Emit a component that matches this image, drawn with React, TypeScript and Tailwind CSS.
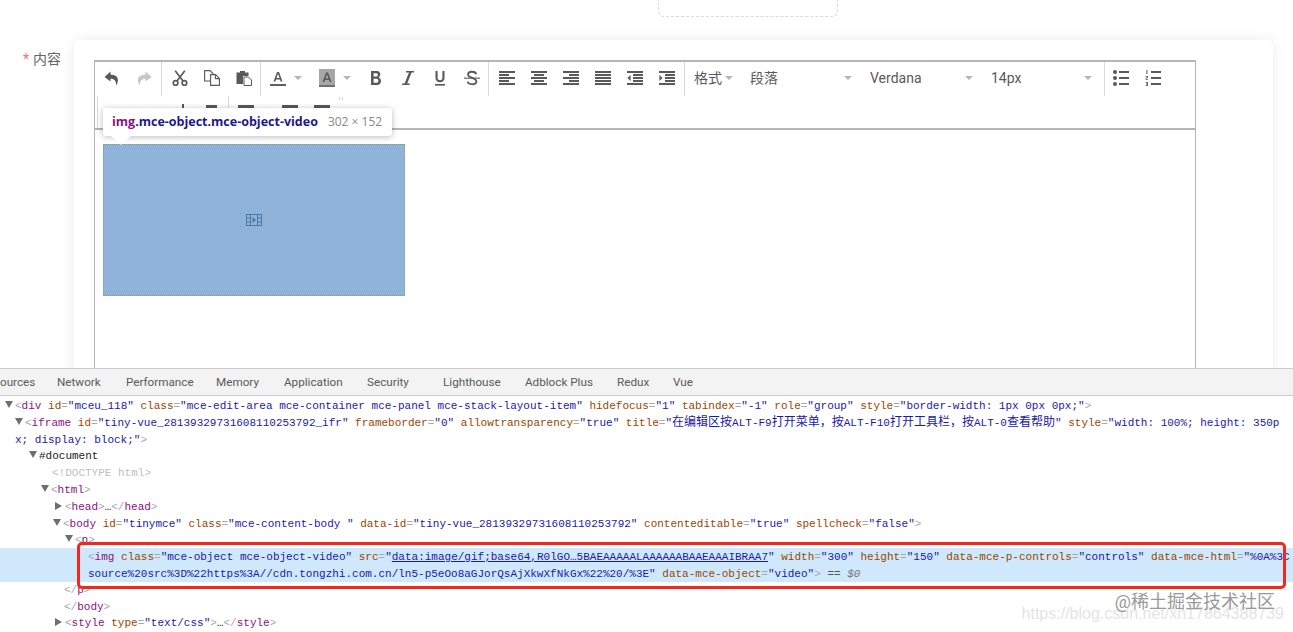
import React from "react";

const sans = "font-['Roboto','Noto_Sans_CJK_SC',sans-serif]";
const ink = "#595959";

// toolbar glyphs, all on a 16 grid
const Icon = ({ children, size = 16 }: { children: React.ReactNode; size?: number }) => (
  <svg width={size} height={size} viewBox="0 0 16 16" fill={ink}>
    {children}
  </svg>
);

const Undo = ({ color = ink }: { color?: string }) => (
  <svg width="16" height="16" viewBox="0 0 16 16" fill={color}>
    <path d="M6.5 1.5 L0.5 7 L6.5 11.5 V8.7 C10 8.5 12.2 10.5 12.2 15.5 C15 11.5 15.5 5 6.5 4.6 Z" />
  </svg>
);

const Redo = () => (
  <svg width="16" height="16" viewBox="0 0 16 16" fill="#c6c6c6">
    <path d="M9.5 1.5 L15.5 7 L9.5 11.5 V8.7 C6 8.5 3.8 10.5 3.8 15.5 C1 11.5 0.5 5 9.5 4.6 Z" />
  </svg>
);

const Cut = () => (
  <svg width="16" height="16" viewBox="0 0 16 16" fill="none" stroke={ink} strokeWidth="1.7">
    <circle cx="3.6" cy="13" r="2.3" />
    <circle cx="12.4" cy="13" r="2.3" />
    <path d="M5 11 L12.8 0.8 M11 11 L3.2 0.8" />
  </svg>
);

const Copy = () => (
  <svg width="16" height="16" viewBox="0 0 16 16" fill="#fff" stroke={ink} strokeWidth="1.1">
    <path d="M0.6 0.6 H6 L9 3.6 V11 H0.6 Z" />
    <path d="M6.6 4.6 H11.6 L15.4 8.4 V15.4 H6.6 Z" />
    <path d="M11.4 4.8 V8.6 H15.2" fill="none" />
  </svg>
);

const Paste = () => (
  <Icon>
    <path d="M0.5 2.5 H4 V1 H9 V2.5 H12.5 V6 H7 V14 H0.5 Z" />
    <path d="M8 7 H12.5 L15.5 10 V15.5 H8 Z" fill="#fff" stroke={ink} strokeWidth="1" />
  </Icon>
);

const TextColor = () => (
  <svg width="16" height="16" viewBox="0 0 16 16">
    <path d="M3.5 11.5 L7 2 H9 L12.5 11.5 H10.7 L10 9.4 H6 L5.3 11.5 Z M6.5 8 H9.5 L8 3.8 Z" fill={ink} fillRule="evenodd" />
    <rect x="0" y="14" width="16" height="2" fill="#5f5f5f" />
  </svg>
);

const BackColor = () => (
  <svg width="16" height="18" viewBox="0 0 16 18">
    <rect width="16" height="18" fill="#a6a6a6" />
    <rect y="16" width="16" height="2" fill="#707070" />
    <path d="M3.5 13 L7 3.5 H9 L12.5 13 H10.7 L10 11 H6 L5.3 13 Z M6.5 9.5 H9.5 L8 5.3 Z" fill={ink} fillRule="evenodd" />
  </svg>
);

const Bold = () => (
  <Icon>
    <path fillRule="evenodd" d="M3 1 H9 C12.6 1 13.4 5.8 10.6 7.4 C14.4 8.6 13.6 15 9 15 H3 Z M5.6 3.2 V6.6 H8.2 C10.4 6.6 10.4 3.2 8.2 3.2 Z M5.6 8.8 V12.8 H8.6 C11 12.8 11 8.8 8.6 8.8 Z" />
  </Icon>
);

const Italic = () => (
  <Icon>
    <path d="M6 1 H14 V2.6 H11.6 L7.2 13.4 H9.6 V15 H2 V13.4 H4.6 L9 2.6 H6 Z" />
  </Icon>
);

const Underline = () => (
  <Icon>
    <path d="M3.5 1 H5.6 V8 C5.6 11 10.4 11 10.4 8 V1 H12.5 V8 C12.5 13.6 3.5 13.6 3.5 8 Z" />
    <rect x="3" y="14" width="10" height="1.6" />
  </Icon>
);

const Strike = () => (
  <Icon>
    <path d="M12.2 4.2 C11.6 1.2 4.2 0.6 4 4.4 C3.8 8.4 12.6 7.4 12.4 11.6 C12.2 15.2 4.4 15 3.6 11.6" fill="none" stroke={ink} strokeWidth="1.8" />
    <rect x="0" y="7.6" width="16" height="1.1" />
  </Icon>
);

// rows of bars: [x, width] top to bottom
const Bars = ({ rows }: { rows: [number, number][] }) => (
  <Icon>
    {rows.map(([x, w], i) => (
      <rect key={i} x={x} y={1 + i * 3} width={w} height="2" />
    ))}
  </Icon>
);

const Outdent = () => (
  <Icon>
    <rect x="0" y="1" width="16" height="2" />
    <rect x="6" y="4" width="10" height="2" />
    <rect x="6" y="7" width="10" height="2" />
    <rect x="6" y="10" width="10" height="2" />
    <rect x="0" y="13" width="16" height="2" />
    <path d="M3.6 5 L0.4 8 L3.6 11 Z" />
  </Icon>
);

const Indent = () => (
  <Icon>
    <rect x="0" y="1" width="16" height="2" />
    <rect x="6" y="4" width="10" height="2" />
    <rect x="6" y="7" width="10" height="2" />
    <rect x="6" y="10" width="10" height="2" />
    <rect x="0" y="13" width="16" height="2" />
    <path d="M0.4 5 L3.6 8 L0.4 11 Z" />
  </Icon>
);

const BulletList = () => (
  <Icon>
    <circle cx="2" cy="2" r="2" />
    <circle cx="2" cy="8" r="2" />
    <circle cx="2" cy="14" r="2" />
    <rect x="6" y="1" width="10" height="2" />
    <rect x="6" y="7" width="10" height="2" />
    <rect x="6" y="13" width="10" height="2" />
  </Icon>
);

const NumberList = () => (
  <Icon>
    <rect x="1.4" y="0" width="1" height="4" />
    <path d="M0.6 6 H3 V8 H1.4 V9 H3 V9.8 H0.6 V7.4 H2.2 V6.8 H0.6 Z" />
    <path d="M0.6 12 H3 V16 H0.6 V15.2 H2.2 V14.4 H1 V13.6 H2.2 V12.8 H0.6 Z" />
    <rect x="6" y="1" width="10" height="2" />
    <rect x="6" y="7" width="10" height="2" />
    <rect x="6" y="13" width="10" height="2" />
  </Icon>
);

const Btn = ({ children }: { children: React.ReactNode }) => (
  <div className="flex h-[32px] w-[32px] items-center justify-center">{children}</div>
);

const Caret = () => (
  <span className="h-0 w-0 border-x-[4px] border-t-[4px] border-x-transparent border-t-[#b5b5b5]" />
);

const Sep = () => <div className="h-[34px] w-px bg-[#d9d9d9]" />;

const Select = ({ label, width }: { label: string; width: string }) => (
  <div className={`flex h-[32px] items-center justify-between pl-[6px] pr-[12px] text-[14px] text-[#595959] ${width}`}>
    <span>{label}</span>
    <Caret />
  </div>
);

const Toolbar = () => (
  <div className={`h-[68px] overflow-hidden border-b-2 border-[#b5b5b5] ${sans}`}>
    <div className="flex h-[34px] items-start pl-px">
      <Btn><Undo /></Btn>
      <Btn><Redo /></Btn>
      <div className="ml-px mr-[2px]"><Sep /></div>
      <Btn><Cut /></Btn>
      <Btn><Copy /></Btn>
      <Btn><Paste /></Btn>
      <div className="mr-px"><Sep /></div>
      <Btn><TextColor /></Btn>
      <div className="flex h-[32px] w-[17px] items-center"><Caret /></div>
      <Btn><BackColor /></Btn>
      <div className="flex h-[32px] w-[17px] items-center"><Caret /></div>
      <Btn><Bold /></Btn>
      <Btn><Italic /></Btn>
      <Btn><Underline /></Btn>
      <Btn><Strike /></Btn>
      <div className="mr-[2px]"><Sep /></div>
      <Btn><Bars rows={[[0, 16], [0, 10], [0, 16], [0, 10], [0, 16]]} /></Btn>
      <Btn><Bars rows={[[0, 16], [3, 10], [0, 16], [3, 10], [0, 16]]} /></Btn>
      <Btn><Bars rows={[[0, 16], [6, 10], [0, 16], [6, 10], [0, 16]]} /></Btn>
      <Btn><Bars rows={[[0, 16], [0, 16], [0, 16], [0, 16], [0, 16]]} /></Btn>
      <Btn><Outdent /></Btn>
      <Btn><Indent /></Btn>
      <div className="ml-px"><Sep /></div>
      <div className="flex h-[32px] w-[59px] items-center gap-[3px] pl-[9px] text-[14px] text-[#595959]">
        <span className="whitespace-nowrap">格式</span>
        <Caret />
      </div>
      <Select label="段落" width="w-[120px]" />
      <Select label="Verdana" width="w-[121px]" />
      <Select label="14px" width="w-[119px]" />
      <Sep />
      <Btn><BulletList /></Btn>
      <Btn><NumberList /></Btn>
    </div>
    {/* second row, nearly all of it under the element tooltip */}
    <div className="flex h-[32px] items-start">
      <div className="ml-[2px] h-[32px] w-px bg-[#d9d9d9]" />
      <div className="ml-[84px] mt-[8px] h-[4px] w-[2px] bg-[#595959]" />
      <div className="ml-[22px] mt-[9px] h-[3px] w-[11px] bg-[#595959]" />
      <div className="ml-[11px] h-[32px] w-px bg-[#d9d9d9]" />
      <div className="ml-[9px] mt-[9px] h-[3px] w-[16px] bg-[#595959]" />
      <div className="ml-[28px] mt-[9px] h-[3px] w-[16px] bg-[#595959]" />
      <div className="ml-[16px] mt-[9px] h-[3px] w-[16px] bg-[#595959]" />
      <div className="ml-[9px] mt-[1px] h-[3px] w-[4px] border-x border-[#d4d4d4]" />
    </div>
  </div>
);

const ElementTip = () => (
  <div className="absolute left-[8px] top-[46px] flex h-[28px] w-[289px] items-center rounded-[3px] bg-white pl-[9px] font-['Open_Sans',sans-serif] text-[12px] shadow-[0_1px_6px_rgba(0,0,0,0.28)]">
    <span className="text-[12.5px] font-bold text-[#881280]">img</span>
    <span className="text-[12.5px] font-bold text-[#1a1a8c]">.mce-object.mce-object-video</span>
    <span className="ml-[10px] text-[#888888]">302 × 152</span>
    <span className="absolute left-[8px] top-full h-0 w-0 border-x-[10px] border-t-[9px] border-x-transparent border-t-white" />
  </div>
);

const VideoPlaceholder = () => (
  <div className="ml-[8px] mt-[14px] flex h-[152px] w-[302px] items-center justify-center border border-dotted border-[#8f9a78] bg-[#8fb3d9]">
    <svg width="16" height="12" viewBox="0 0 16 12">
      <rect x="0.5" y="0.5" width="15" height="11" fill="none" stroke="#4f76a8" />
      <path d="M4.5 0.5 V11.5 M11.5 0.5 V11.5 M0.5 4 H4.5 M0.5 8 H4.5 M11.5 4 H15.5 M11.5 8 H15.5" stroke="#4f76a8" />
      <path d="M6.5 3 L10 6 L6.5 9 Z" fill="#4f76a8" />
    </svg>
  </div>
);

const tabs = [
  ["ources", "w-[57px]"],
  ["Network", "w-[69px]"],
  ["Performance", "w-[90px]"],
  ["Memory", "w-[68px]"],
  ["Application", "w-[83px]"],
  ["Security", "w-[76px]"],
  ["Lighthouse", "w-[82px]"],
  ["Adblock Plus", "w-[92px]"],
  ["Redux", "w-[56px]"],
  ["Vue", "w-[24px]"],
];

const Tag = ({ children }: { children: React.ReactNode }) => <span className="text-[#881280]">{children}</span>;
const Attr = ({ children }: { children: React.ReactNode }) => <span className="text-[#994500]">{children}</span>;
const Val = ({ children }: { children: React.ReactNode }) => <span className="text-[#1a1aa6]">{children}</span>;
const Gray = ({ children }: { children: React.ReactNode }) => <span className="text-[#a8a8a8]">{children}</span>;

const Arrow = ({ open }: { open?: boolean }) =>
  open ? (
    <span className="mr-[2px] inline-block h-0 w-0 border-x-[4px] border-t-[7px] border-x-transparent border-t-[#6e6e6e] align-[1px]" />
  ) : (
    <span className="mr-[3px] ml-px inline-block h-0 w-0 border-y-[4px] border-l-[7px] border-y-transparent border-l-[#6e6e6e] align-[0px]" />
  );

const Line = ({ pad, children }: { pad: string; children: React.ReactNode }) => (
  <div className={`h-[16.8px] whitespace-pre ${pad}`}>{children}</div>
);

const Attrs = ({ items }: { items: [string, string][] }) => (
  <>
    {items.map(([k, v]) => (
      <span key={k}>
        {" "}
        <Attr>{k}</Attr>
        <Gray>=</Gray>
        <Val>"{v}"</Val>
      </span>
    ))}
  </>
);

const Elements = () => (
  <div className="relative flex-1 overflow-hidden bg-white pt-[2px] font-['Liberation_Mono','Noto_Sans_CJK_SC',monospace] text-[11px] leading-[16.8px] text-[#222]">
    <Line pad="pl-[5px]">
      <Arrow open />
      <Gray>&lt;</Gray>
      <Tag>div</Tag>
      <Attrs items={[["id", "mceu_118"], ["class", "mce-edit-area mce-container mce-panel mce-stack-layout-item"], ["hidefocus", "1"], ["tabindex", "-1"], ["role", "group"], ["style", "border-width: 1px 0px 0px;"]]} />
      <Gray>&gt;</Gray>
    </Line>
    <Line pad="pl-[15px]">
      <Arrow open />
      <Gray>&lt;</Gray>
      <Tag>iframe</Tag>
      <Attrs items={[["id", "tiny-vue_28139329731608110253792_ifr"], ["frameborder", "0"], ["allowtransparency", "true"]]} />
      {" "}<Attr>title</Attr><Gray>=</Gray>
      <Val>"<span className="text-[12px]">在编辑区按</span>ALT-F9<span className="text-[12px]">打开菜单，按</span>ALT-F10<span className="text-[12px]">打开工具栏，按</span>ALT-0<span className="text-[12px]">查看帮助</span>"</Val>
      {" "}<Attr>style</Attr><Gray>=</Gray><Val>"width: 100%; height: 350p</Val>
    </Line>
    <Line pad="pl-[15px]">
      <Val>x; display: block;"</Val>
      <Gray>&gt;</Gray>
    </Line>
    <Line pad="pl-[29px]">
      <Arrow open />
      #document
    </Line>
    <Line pad="pl-[52px]">
      <span className="text-[#c0c0c0]">&lt;!DOCTYPE html&gt;</span>
    </Line>
    <Line pad="pl-[41px]">
      <Arrow open />
      <Gray>&lt;</Gray><Tag>html</Tag><Gray>&gt;</Gray>
    </Line>
    <Line pad="pl-[54px]">
      <Arrow />
      <Gray>&lt;</Gray><Tag>head</Tag><Gray>&gt;</Gray>…<Gray>&lt;/</Gray><Tag>head</Tag><Gray>&gt;</Gray>
    </Line>
    <Line pad="pl-[53px]">
      <Arrow open />
      <Gray>&lt;</Gray><Tag>body</Tag>
      <Attrs items={[["id", "tinymce"], ["class", "mce-content-body "], ["data-id", "tiny-vue_28139329731608110253792"], ["contenteditable", "true"], ["spellcheck", "false"]]} />
      <Gray>&gt;</Gray>
    </Line>
    <Line pad="pl-[65px]">
      <Arrow open />
      <Gray>&lt;</Gray><Tag>p</Tag><Gray>&gt;</Gray>
    </Line>
    <div className="-mt-px h-[33.6px] bg-[#cfe8fc] pt-px">
      <Line pad="pl-[88px]">
        <Gray>&lt;</Gray><Tag>img</Tag>
        <Attrs items={[["class", "mce-object mce-object-video"]]} />
        {" "}<Attr>src</Attr><Gray>=</Gray><Val>"</Val><span className="text-[#1a1aa6] underline">data:image/gif;base64,R0lGO…5BAEAAAAALAAAAAABAAEAAAIBRAA7</span><Val>"</Val>
        <Attrs items={[["width", "300"], ["height", "150"], ["data-mce-p-controls", "controls"]]} />
        {" "}<Attr>data-mce-html</Attr><Gray>=</Gray><Val>"%0A%3C</Val>
      </Line>
      <Line pad="pl-[88px]">
        <Val>source%20src%3D%22https%3A//cdn.tongzhi.com.cn/ln5-p5eOo8aGJorQsAjXkwXfNkGx%22%20/%3E"</Val>
        <Attrs items={[["data-mce-object", "video"]]} />
        <Gray>&gt;</Gray> <span className="text-[#555]">==</span> <span className="italic text-[#777]">$0</span>
      </Line>
    </div>
    <Line pad="pl-[64px]">
      <Gray>&lt;/</Gray><Tag>p</Tag><Gray>&gt;</Gray>
    </Line>
    <Line pad="pl-[64px]">
      <Gray>&lt;/</Gray><Tag>body</Tag><Gray>&gt;</Gray>
    </Line>
    <Line pad="pl-[54px]">
      <Arrow />
      <Gray>&lt;</Gray><Tag>style</Tag>
      <Attrs items={[["type", "text/css"]]} />
      <Gray>&gt;</Gray>…<Gray>&lt;/</Gray><Tag>style</Tag><Gray>&gt;</Gray>
    </Line>

    {/* red annotation drawn on top of the selected node */}
    <div className="absolute left-[77px] top-[146px] h-[47px] w-[1209px] rounded-[5px] border-[3px] border-[#f0281e]" />
    <div className="absolute right-[9px] top-[210px] font-['Liberation_Sans',sans-serif] text-[16px] leading-[16px] text-[#e4e4e4]">
      https://blog.csdn.net/xh17864388739
    </div>
    <div className="absolute right-[18px] top-[197px] font-['Roboto','Noto_Sans_CJK_SC',sans-serif] text-[18px] leading-[18px] text-[#9a9a9a]">
      @稀土掘金技术社区
    </div>
  </div>
);

export default function App() {
  return (
    <div className="flex h-[632px] w-[1293px] flex-col overflow-hidden bg-white">
      <div className="h-[368px] shrink-0 overflow-hidden">
        <div className="ml-[658px] h-[17px] w-[180px] rounded-b-[6px] border border-t-0 border-dashed border-[#d9d9d9]" />
        <div className="mt-[23px] flex">
          <div className={`w-[74px] shrink-0 pr-[13px] pt-[9px] text-right text-[14px] leading-[20px] text-[#666] ${sans}`}>
            <span className="mr-[4px] text-[#f56c6c]">*</span>内容
          </div>
          <div className="h-[400px] w-[1199px] rounded-[6px] bg-white pl-[20px] pt-[20px] shadow-[0_0_14px_rgba(0,0,0,0.08)]">
            <div className="relative h-[400px] w-[1102px] border-x border-t-2 border-[#b5b5b5]">
              <Toolbar />
              <VideoPlaceholder />
              <ElementTip />
            </div>
          </div>
        </div>
      </div>
      <div className="flex h-[28px] shrink-0 items-center overflow-hidden border-y border-[#cccccc] bg-[#f3f3f3] pt-px font-['Roboto',sans-serif] text-[11.7px] text-[#5a5a5a]">
        {tabs.map(([name, width]) => (
          <span key={name} className={`shrink-0 whitespace-nowrap ${width}`}>
            {name}
          </span>
        ))}
      </div>
      <Elements />
    </div>
  );
}
